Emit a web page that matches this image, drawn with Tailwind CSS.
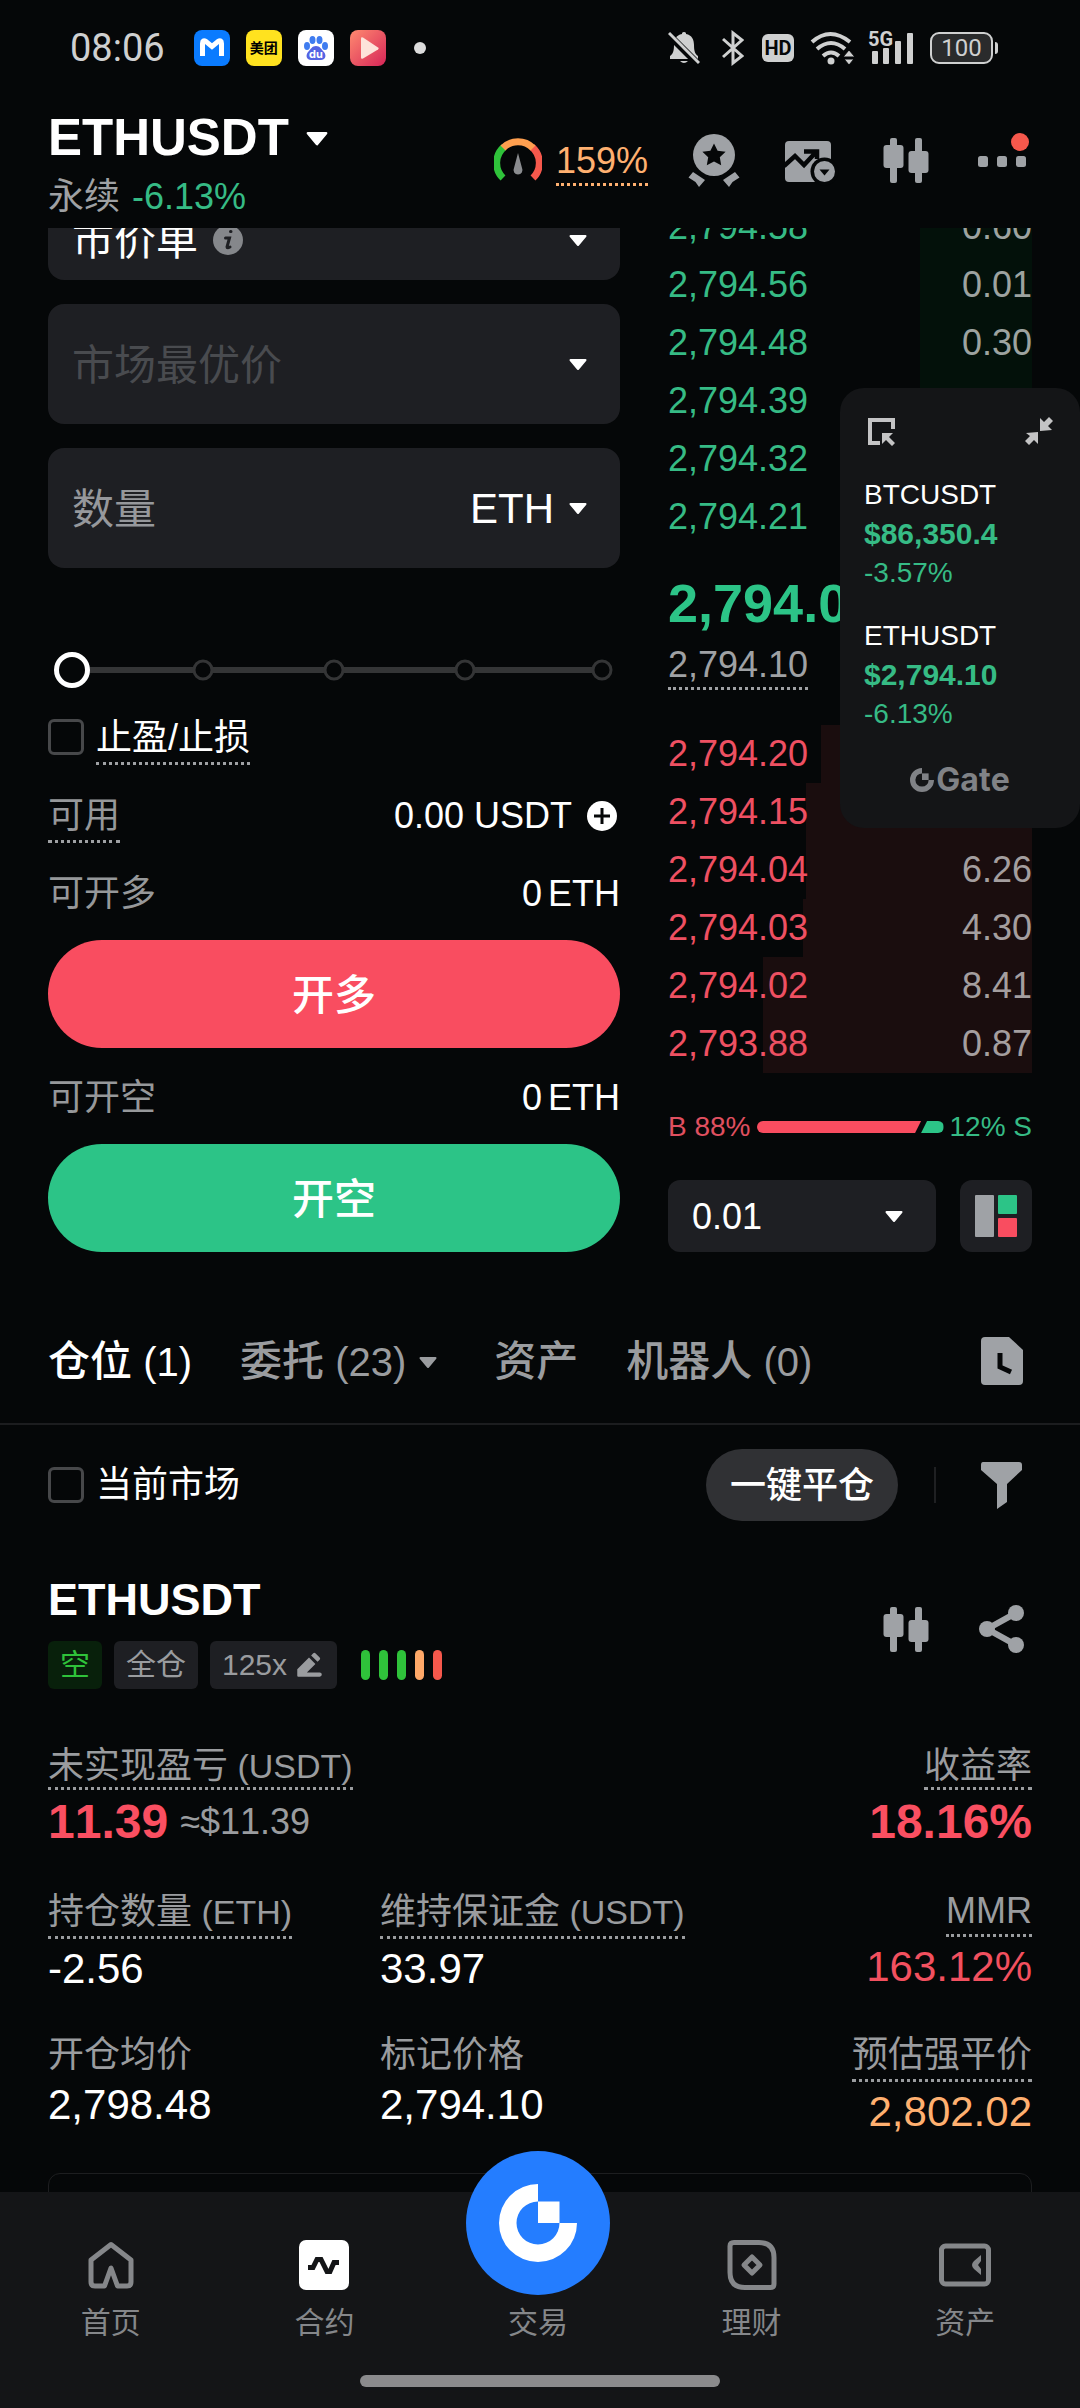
<!DOCTYPE html>
<html lang="zh-CN">
<head>
    <title>ETHUSDT 永续</title>
    <meta charset="utf-8">
    <meta name="viewport" content="width=device-width, initial-scale=1">
    <script src="https://cdn.jsdelivr.net/npm/@tailwindcss/browser@4"></script>
</head>
<body class="flex h-screen flex-col overflow-hidden bg-[#050708] font-['Liberation_Sans','Noto_Sans_CJK_SC',sans-serif] text-4xl text-white [font-kerning:none]">
    <!-- 公用图标 -->
    <svg class="hidden">
        <symbol id="caret" viewBox="0 0 36 36">
            <path d="M10.500 14h15L18 23z" fill="currentColor" stroke="currentColor" stroke-width="2" stroke-linejoin="round"/>
        </symbol>
        <symbol id="candles" viewBox="0 0 60 60">
            <g fill="currentColor">
                <rect x="14" y="8" width="7" height="45" rx="2"/>
                <rect x="7.500" y="15" width="20" height="23" rx="3"/>
                <rect x="39" y="8" width="7" height="45" rx="2"/>
                <rect x="32.500" y="21" width="20" height="22" rx="3"/>
            </g>
        </symbol>
        <symbol id="gate" viewBox="0 0 78 78">
            <path d="M39 0A39 39 0 1 0 78 39H60.500A21.500 21.500 0 1 1 39 17.500z" fill="currentColor"/>
            <rect x="39" y="17.500" width="21.500" height="21.500" fill="currentColor"/>
        </symbol>
    </svg>

    <div class="relative z-10 shrink-0 bg-[#050708]">
        <!-- 系统状态栏 -->
        <div class="flex h-24 items-center justify-between pr-[82px] pl-[70px] text-[#cfd0d0]">
            <div class="flex items-center">
                <span class="font-[Roboto] text-[38px]">08:06</span>
                <svg class="ml-[29px] size-9" viewBox="0 0 36 36">
                    <rect width="36" height="36" rx="8" fill="#0a7bff"/>
                    <path d="M8.500 26V13.500q0-4 3.500-2l6 5 6-5q3.500-2 3.500 2V26" fill="none" stroke="#fff" stroke-width="5"/>
                </svg>
                <span class="ml-4 flex size-9 items-center justify-center rounded-lg bg-[#ffe21f] text-sm font-bold text-black">美团</span>
                <svg class="ml-4 size-9" viewBox="0 0 36 36">
                    <rect width="36" height="36" rx="8" fill="#fff"/>
                    <g fill="#3f7cf0">
                        <ellipse cx="9" cy="16" rx="3" ry="4"/>
                        <ellipse cx="14.500" cy="10" rx="3" ry="4"/>
                        <ellipse cx="21.500" cy="10" rx="3" ry="4"/>
                        <ellipse cx="27" cy="16" rx="3" ry="4"/>
                    </g>
                    <path d="M18 16c4 0 5 3 8 6 3 4 1 8-3 8H13c-4 0-6-4-3-8 3-3 4-6 8-6z" fill="#5464e4"/>
                    <text x="18" y="28" text-anchor="middle" font-family="Inter" font-size="11" font-weight="700" fill="#fff">du</text>
                </svg>
                <svg class="ml-4 size-9" viewBox="0 0 36 36">
                    <defs>
                        <linearGradient id="play" x1="0" y1="0" x2="1" y2="1">
                            <stop offset="0" stop-color="#ff8a70"/>
                            <stop offset="1" stop-color="#d62558"/>
                        </linearGradient>
                    </defs>
                    <rect width="36" height="36" rx="8" fill="url(#play)"/>
                    <path d="M11 8.500v19q0 2 2 1l15-9q1.500-1 0-2l-15-10q-2-1-2 1z" fill="#fde3da"/>
                </svg>
                <span class="ml-7 size-3 rounded-full bg-[#dcdcdc]"></span>
            </div>
            <div class="flex items-center">
                <svg class="h-9 w-8" viewBox="0 0 32 36" fill="currentColor">
                    <path d="M16 2c2 0 2 1 2 2 6 1 8 6 8 11 0 6 1 9 4 11v3H2v-3c3-2 4-5 4-11 0-5 2-10 8-11 0-1 0-2 2-2zM12 31h8q-4 4-8 0z"/>
                    <path d="M0 4l30 30" stroke="#050708" stroke-width="7"/>
                    <path d="M1 3l30 30" stroke="currentColor" stroke-width="3"/>
                </svg>
                <svg class="ml-[22px] h-9 w-[22px]" viewBox="0 0 22 36" fill="none" stroke="currentColor" stroke-width="3">
                    <path d="M1 9l19 17-9 7V3l9 7L1 27"/>
                </svg>
                <span class="ml-[18px] flex h-7 w-8 items-center justify-center rounded-md bg-[#cfd0d0] font-[Roboto] text-xl font-bold text-[#050708]">HD</span>
                <svg class="ml-4 h-9 w-[46px]" viewBox="0 0 46 36" fill="none" stroke="currentColor" stroke-width="4">
                    <path d="M2 12q18-16 38 0M7 19q14-12 28 0M13 26q8-7 16 0"/>
                    <circle cx="21" cy="31" r="3.500" fill="currentColor" stroke="none"/>
                    <path d="M39 20l6 7H33zM39 35l5-6H34z" fill="currentColor" stroke="#050708" stroke-width="1"/>
                </svg>
                <svg class="ml-3 h-9 w-[46px] overflow-visible" viewBox="0 0 46 36" fill="currentColor">
                    <text x="0" y="16" font-family="Roboto" font-size="20" font-weight="700">5G</text>
                    <rect x="4" y="21" width="6" height="13" rx="1"/>
                    <rect x="15" y="18" width="6" height="16" rx="1"/>
                    <rect x="27" y="11" width="6" height="23" rx="1"/>
                    <rect x="39" y="3" width="6" height="31" rx="1"/>
                </svg>
                <span class="ml-4 flex h-8 w-[63px] items-center justify-center rounded-[9px] border-2 border-[#cfd0d0] bg-[#2a2b2c] font-[Roboto] text-2xl">100</span>
                <span class="ml-0.5 h-3 w-[3px] rounded-r bg-[#cfd0d0]"></span>
            </div>
        </div>

        <!-- 交易对标题 -->
        <header class="flex items-center justify-between px-12 pt-3 pb-[7px]">
            <div>
                <button class="flex items-center leading-[60px]">
                    <h1 class="text-[51px] font-bold">ETHUSDT</h1>
                    <svg class="ml-1.5 size-[44px]"><use href="#caret"/></svg>
                </button>
                <p class="mt-[5px] flex gap-3 leading-[48px]">
                    <span class="text-[#9fa1a4]">永续</span>
                    <span class="text-[#36bb85]">-6.13%</span>
                </p>
            </div>
            <div class="flex items-center gap-9 pb-2.5 text-[#9fa2a6]">
                <div class="flex items-center gap-3.5">
                    <svg class="h-11 w-12" viewBox="0 0 48 44" fill="none" stroke-width="7">
                        <path d="M9 40A21 21 0 0 1 10 9" stroke="#2fc23a"/>
                        <path d="M38 9A21 21 0 0 1 39 40" stroke="#f6584c"/>
                        <path d="M9 10A21 21 0 0 1 39 10" stroke="#ff9f4f"/>
                        <path d="M24 15l4 15a4.500 4.500 0 1 1-8 0z" fill="#8a8c8f"/>
                    </svg>
                    <span class="mt-1.5 border-b-3 border-dotted border-[#ffb070] leading-11 text-[#ffb070]">159%</span>
                </div>
                <button aria-label="活动">
                    <svg class="size-[60px]" viewBox="0 0 60 60" fill="currentColor">
                        <circle cx="30" cy="25" r="21"/>
                        <path d="M30 13.500l3.600 7.200 8 1.100-5.800 5.500 1.400 7.900-7.200-3.800-7.200 3.800 1.400-7.900-5.800-5.500 8-1.100z" fill="#050708"/>
                        <path d="M9 42l12 8-6 7-3.500-5-7-4.500zM51 42l-12 8 6 7 3.500-5 7-4.500z"/>
                    </svg>
                </button>
                <button aria-label="行情">
                    <svg class="size-[60px]" viewBox="0 0 60 60" fill="currentColor">
                        <rect x="5" y="11" width="46" height="41" rx="4"/>
                        <path d="M4 36l11-10 9 9 13-14M24 21.500h13V29" fill="none" stroke="#050708" stroke-width="4.500"/>
                        <circle cx="44.500" cy="41.500" r="14" fill="#050708"/>
                        <circle cx="44.500" cy="41.500" r="10.500"/>
                        <path d="M39.500 39.500h10l-5 6z" fill="#050708"/>
                    </svg>
                </button>
                <button aria-label="K线"><svg class="size-[60px]"><use href="#candles"/></svg></button>
                <button aria-label="更多">
                    <svg class="size-[60px]" viewBox="0 0 60 60" fill="currentColor">
                        <rect x="6" y="26" width="10" height="11" rx="2.500"/>
                        <rect x="25" y="26" width="10" height="11" rx="2.500"/>
                        <rect x="44" y="26" width="10" height="11" rx="2.500"/>
                        <circle cx="48" cy="12" r="9" fill="#f6584c"/>
                    </svg>
                </button>
            </div>
        </header>
    </div>

    <main class="relative -mt-[30px] min-h-0 flex-1 overflow-hidden">
        <div class="grid grid-cols-[572fr_364fr] gap-12 px-12">
            <!-- 下单 -->
            <form class="pt-0.5">
                <div class="flex flex-col gap-6 text-[42px]">
                    <div class="relative">
                        <select aria-label="订单类型" class="h-20 w-full appearance-none rounded-2xl bg-[#1e1f23] px-6 pt-0.5">
                            <option>市价单</option>
                        </select>
                        <svg class="pointer-events-none absolute top-1/2 left-[165px] size-[30px] -translate-y-1/2" viewBox="0 0 30 30">
                            <circle cx="15" cy="15" r="15" fill="#85878b"/>
                            <path d="M17.500 6.500h.5M12.500 13h4l-2.500 9q0 1.500 3 0" fill="none" stroke="#1e1f23" stroke-width="3" stroke-linecap="round"/>
                        </svg>
                        <svg class="pointer-events-none absolute top-1/2 right-6 size-9 -translate-y-1/2"><use href="#caret"/></svg>
                    </div>
                    <div class="relative">
                        <select aria-label="价格" class="h-[120px] w-full appearance-none rounded-2xl bg-[#1e1f23] px-6 pt-1 text-[#494b4f]">
                            <option>市场最优价</option>
                        </select>
                        <svg class="pointer-events-none absolute top-1/2 right-6 size-9 -translate-y-1/2"><use href="#caret"/></svg>
                    </div>
                    <div class="relative flex h-[120px] items-center rounded-2xl bg-[#1e1f23]">
                        <input type="text" aria-label="数量" placeholder="数量" class="h-full w-0 flex-1 px-6 pt-1 placeholder:text-[#96989c]">
                        <select aria-label="单位" class="h-full appearance-none pt-0.5 pr-[66px]">
                            <option>ETH</option>
                        </select>
                        <svg class="pointer-events-none absolute right-6 size-9"><use href="#caret"/></svg>
                    </div>
                </div>

                <div class="relative mt-[84px] h-9">
                    <svg class="w-full" viewBox="0 0 572 36" stroke="#343536">
                        <path d="M24 18h530" stroke-width="6"/>
                        <g fill="#050708" stroke-width="3">
                            <circle cx="155" cy="18" r="9"/>
                            <circle cx="286" cy="18" r="9"/>
                            <circle cx="417" cy="18" r="9"/>
                            <circle cx="554" cy="18" r="9"/>
                        </g>
                    </svg>
                    <input type="range" aria-label="仓位比例" min="0" max="100" value="0" class="absolute inset-x-1.5 top-0 h-9 appearance-none bg-transparent [&::-webkit-slider-thumb]:size-9 [&::-webkit-slider-thumb]:appearance-none [&::-webkit-slider-thumb]:rounded-full [&::-webkit-slider-thumb]:border-5 [&::-webkit-slider-thumb]:border-white [&::-webkit-slider-thumb]:bg-[#050708]">
                </div>

                <div class="mt-[26px] flex items-start gap-3 leading-[48px]">
                    <input id="tpsl" type="checkbox" class="mt-[5px] size-9 appearance-none rounded-md border-3 border-[#47484a]">
                    <label for="tpsl" class="border-b-3 border-dotted border-[#9fa1a4]">止盈/止损</label>
                </div>
                <div class="mt-[27px] flex items-start justify-between leading-[48px]">
                    <span class="border-b-3 border-dotted border-[#9fa1a4] text-[#96989a]">可用</span>
                    <span class="flex items-center gap-3">
                        0.00 USDT
                        <button type="button" aria-label="充值">
                            <svg class="size-9" viewBox="0 0 36 36">
                                <circle cx="18" cy="18" r="15" fill="#fff"/>
                                <path d="M18 10v16M10 18h16" stroke="#050708" stroke-width="3"/>
                            </svg>
                        </button>
                    </span>
                </div>
                <div class="mt-[27px] flex justify-between leading-[48px]">
                    <span class="text-[#96989a]">可开多</span>
                    <span class="flex gap-1.5"><span>0</span>ETH</span>
                </div>
                <button type="button" class="mt-[22px] h-[108px] w-full rounded-full bg-[#f94d60] pt-1 text-[42px] font-medium">开多</button>
                <div class="mt-[26px] flex justify-between leading-[48px]">
                    <span class="text-[#96989a]">可开空</span>
                    <span class="flex gap-1.5"><span>0</span>ETH</span>
                </div>
                <button type="button" class="mt-[22px] h-[108px] w-full rounded-full bg-[#2cc487] pt-1 text-[42px] font-medium">开空</button>
            </form>

            <!-- 盘口 -->
            <section>
                <table class="w-full">
                    <tbody class="text-[#36bb85] [&_td+td]:text-right [&_td+td]:text-[#9da3a0] [&_tr]:h-[58px]">
                        <tr class="bg-[linear-gradient(to_left,#03110a_31%,transparent_31%)]"><td>2,794.58</td><td>0.60</td></tr>
                        <tr class="bg-[linear-gradient(to_left,#03110a_31%,transparent_31%)]"><td>2,794.56</td><td>0.01</td></tr>
                        <tr class="bg-[linear-gradient(to_left,#03110a_31%,transparent_31%)]"><td>2,794.48</td><td>0.30</td></tr>
                        <tr class="bg-[linear-gradient(to_left,#03110a_31%,transparent_31%)]"><td>2,794.39</td><td></td></tr>
                        <tr><td>2,794.32</td><td></td></tr>
                        <tr><td>2,794.21</td><td></td></tr>
                    </tbody>
                </table>
                <p class="mt-[25px] text-[54px] leading-[64px] font-bold text-[#2cc487]">2,794.09</p>
                <p class="mt-2 flex"><span class="border-b-3 border-dotted border-[#9fa1a4] leading-11 text-[#9fa1a4]">2,794.10</span></p>
                <table class="mt-[35px] w-full">
                    <tbody class="text-[#ee5062] [&_td+td]:text-right [&_td+td]:text-[#a49e9f] [&_tr]:h-[58px]">
                        <tr class="bg-[linear-gradient(to_left,#1a0d0e_58%,transparent_58%)]"><td>2,794.20</td><td></td></tr>
                        <tr class="bg-[linear-gradient(to_left,#1a0d0e_62%,transparent_62%)]"><td>2,794.15</td><td></td></tr>
                        <tr class="bg-[linear-gradient(to_left,#1a0d0e_62%,transparent_62%)]"><td>2,794.04</td><td>6.26</td></tr>
                        <tr class="bg-[linear-gradient(to_left,#1a0d0e_63%,transparent_63%)]"><td>2,794.03</td><td>4.30</td></tr>
                        <tr class="bg-[linear-gradient(to_left,#1a0d0e_74%,transparent_74%)]"><td>2,794.02</td><td>8.41</td></tr>
                        <tr class="bg-[linear-gradient(to_left,#1a0d0e_74%,transparent_74%)]"><td>2,793.88</td><td>0.87</td></tr>
                    </tbody>
                </table>
                <div class="mt-[34px] flex items-center gap-1.5 text-[28px] leading-10">
                    <span class="text-[#e05060]">B 88%</span>
                    <div class="flex h-3 flex-1 overflow-hidden rounded-full">
                        <div class="w-[88%] bg-[#f94d60] [clip-path:polygon(0_0,100%_0,calc(100%-6px)_100%,0_100%)]"></div>
                        <div class="flex-1 bg-[#2cc487] [clip-path:polygon(6px_0,100%_0,100%_100%,0_100%)]"></div>
                    </div>
                    <span class="text-[#36bb85]">12% S</span>
                </div>
                <div class="mt-[33px] flex gap-6">
                    <div class="relative flex-1">
                        <select aria-label="价格精度" class="h-[72px] w-full appearance-none rounded-xl bg-[#1e1f23] px-6 pt-0.5">
                            <option>0.01</option>
                        </select>
                        <svg class="pointer-events-none absolute top-1/2 right-6 size-9 -translate-y-1/2"><use href="#caret"/></svg>
                    </div>
                    <button aria-label="盘口样式" class="flex size-[72px] items-center justify-center rounded-xl bg-[#1e1f23]">
                        <svg class="size-[42px]" viewBox="0 0 42 42">
                            <rect width="19" height="42" rx="1" fill="#9fa2a6"/>
                            <rect x="23" width="19" height="19" rx="1" fill="#2cc487"/>
                            <rect x="23" y="23" width="19" height="19" rx="1" fill="#f94d60"/>
                        </svg>
                    </button>
                </div>
            </section>
        </div>

        <!-- 标签页 -->
        <nav class="mt-20 flex items-center gap-12 border-b-2 border-[#1c1d1f] px-12 pb-[31px] text-[42px] leading-[60px] font-medium text-[#9a9c9f]">
            <a href="#" class="text-white">仓位<span class="text-[40px]"> (1)</span></a>
            <a href="#" class="flex items-center"><span>委托<span class="text-[40px]"> (23)</span></span><svg class="ml-1 size-9"><use href="#caret"/></svg></a>
            <a href="#">资产</a>
            <a href="#">机器人<span class="text-[40px]"> (0)</span></a>
            <button aria-label="历史" class="ml-auto">
                <svg class="size-[60px]" viewBox="0 0 60 60">
                    <path d="M13 5h24l14 13v31q0 4-4 4H13q-4 0-4-4V9q0-4 4-4z" fill="#9fa2a6"/>
                    <path d="M28 21v14l11 5" fill="none" stroke="#050708" stroke-width="5"/>
                </svg>
            </button>
        </nav>

        <div class="mt-6 flex items-center px-12">
            <input id="current" type="checkbox" class="size-9 appearance-none rounded-md border-3 border-[#47484a]">
            <label for="current" class="ml-3">当前市场</label>
            <button class="ml-auto h-[72px] rounded-full bg-[#303134] px-6 pt-0.5 font-medium">一键平仓</button>
            <span class="mx-9 h-9 w-0.5 bg-[#1f2022]"></span>
            <button aria-label="筛选">
                <svg class="size-[60px]" viewBox="0 0 60 60">
                    <path d="M11 7h36q3 0 3 3v5L35 29v18l-10 7V29L9 15v-5q0-3 2-3z" fill="#9fa2a6"/>
                </svg>
            </button>
        </div>

        <!-- 持仓 -->
        <section class="mt-[51px] px-12">
            <div class="flex items-center">
                <div class="flex-1">
                    <h2 class="text-[45px] leading-14 font-bold">ETHUSDT</h2>
                    <div class="mt-[13px] flex items-center gap-3 text-3xl leading-[48px] text-[#9a9c9f]">
                        <span class="rounded-md bg-[#08200b] px-3 text-[#2fc23a]">空</span>
                        <span class="rounded-md bg-[#1e1f23] px-3">全仓</span>
                        <button class="flex items-center gap-1.5 rounded-md bg-[#1e1f23] px-3">125x
                            <svg class="size-8" viewBox="0 0 30 30" fill="currentColor">
                                <path d="M4 25v-6L15 8l6 6-8 8h12q2 0 2 2t-2 2H5q-1 0-1-1zM17 6l2-2q1-1 2 0l4 4q1 1 0 2l-2 2z"/>
                            </svg>
                        </button>
                        <div class="ml-3 flex gap-[9px]">
                            <span class="h-[30px] w-[9px] rounded-full bg-[#2fc23a]"></span>
                            <span class="h-[30px] w-[9px] rounded-full bg-[#2fc23a]"></span>
                            <span class="h-[30px] w-[9px] rounded-full bg-[#2fc23a]"></span>
                            <span class="h-[30px] w-[9px] rounded-full bg-[#ffa868]"></span>
                            <span class="h-[30px] w-[9px] rounded-full bg-[#f6584c]"></span>
                        </div>
                    </div>
                </div>
                <div class="flex gap-9 pb-1 text-[#9fa2a6]">
                    <button aria-label="K线"><svg class="size-[60px]"><use href="#candles"/></svg></button>
                    <button aria-label="分享">
                        <svg class="size-[60px]" viewBox="0 0 60 60" fill="currentColor">
                            <path d="M44 14L15 30l29 16" fill="none" stroke="currentColor" stroke-width="6"/>
                            <circle cx="44" cy="14" r="8"/>
                            <circle cx="15" cy="30" r="8"/>
                            <circle cx="44" cy="46" r="8"/>
                        </svg>
                    </button>
                </div>
            </div>

            <div class="mt-14 flex flex-col gap-9 text-[42px]">
                <div class="flex justify-between">
                    <div>
                        <p class="flex text-4xl leading-[42px] text-[#9a9c9f]"><span class="border-b-3 border-dotted border-[#9a9c9f]">未实现盈亏<span class="text-[34px]"> (USDT)</span></span></p>
                        <p class="mt-0.5 flex items-center gap-3 leading-[60px]">
                            <b class="text-5xl leading-[60px] text-[#fa4f61]">11.39</b>
                            <span class="text-4xl leading-[60px] text-[#9a9c9f]">≈$11.39</span>
                        </p>
                    </div>
                    <div class="flex flex-col items-end">
                        <span class="border-b-3 border-dotted border-[#9a9c9f] text-4xl leading-[42px] text-[#9a9c9f]">收益率</span>
                        <b class="mt-0.5 text-5xl leading-[60px] text-[#fa4f61]">18.16%</b>
                    </div>
                </div>
                <div class="grid grid-cols-3 gap-3 leading-[52px]">
                    <div class="flex flex-col items-start">
                        <span class="mb-1 border-b-3 border-dotted border-[#9a9c9f] text-4xl leading-[48px] text-[#9a9c9f]">持仓数量<span class="text-[34px]"> (ETH)</span></span>
                        <span>-2.56</span>
                    </div>
                    <div class="flex flex-col items-start">
                        <span class="mb-1 border-b-3 border-dotted border-[#9a9c9f] text-4xl leading-[48px] whitespace-nowrap text-[#9a9c9f]">维持保证金<span class="text-[34px]"> (USDT)</span></span>
                        <span>33.97</span>
                    </div>
                    <div class="flex flex-col items-end">
                        <span class="mb-1 border-b-3 border-dotted border-[#9a9c9f] text-4xl leading-[46px] text-[#9a9c9f]">MMR</span>
                        <span class="text-[#f2505f]">163.12%</span>
                    </div>
                </div>
                <div class="grid grid-cols-3 gap-3 leading-[52px]">
                    <div class="flex flex-col items-start">
                        <span class="text-4xl leading-[48px] text-[#9a9c9f]">开仓均价</span>
                        <span>2,798.48</span>
                    </div>
                    <div class="flex flex-col items-start">
                        <span class="text-4xl leading-[48px] text-[#9a9c9f]">标记价格</span>
                        <span>2,794.10</span>
                    </div>
                    <div class="flex flex-col items-end">
                        <span class="mb-1 border-b-3 border-dotted border-[#9a9c9f] text-4xl leading-[48px] text-[#9a9c9f]">预估强平价</span>
                        <span class="text-[#ffb070]">2,802.02</span>
                    </div>
                </div>
            </div>
            <div class="mt-[35px] h-24 rounded-xl border border-[#1d1e20]"></div>
        </section>

        <!-- 悬浮行情窗 -->
        <aside class="absolute top-[190px] right-0 h-[440px] w-60 rounded-3xl bg-[#141517] px-6 pt-7 text-[28px] leading-[39px]">
            <div class="flex justify-between text-[#c4c4c5]">
                <button aria-label="打开">
                    <svg class="size-8" viewBox="0 0 32 32" fill="none" stroke="currentColor" stroke-width="4">
                        <path d="M16 27H6V4h23v9"/>
                        <path d="M18 17h11l-4 4 6 6-3 3-6-6-4 4z" fill="currentColor" stroke="none"/>
                    </svg>
                </button>
                <button aria-label="收起">
                    <svg class="size-8" viewBox="0 0 32 32" fill="currentColor">
                        <path d="M16 2l4 4 5-5 4 4-5 5 4 4-12 1zM2 17l12-1v12l-4-4-5 5-4-4 5-5z"/>
                    </svg>
                </button>
            </div>
            <p class="mt-[27px]">BTCUSDT</p>
            <p class="text-[30px] font-bold text-[#36bb85]">$86,350.4</p>
            <p class="text-[#36bb85]">-3.57%</p>
            <p class="mt-6">ETHUSDT</p>
            <p class="text-[30px] font-bold text-[#36bb85]">$2,794.10</p>
            <p class="text-[#36bb85]">-6.13%</p>
            <p class="mt-[27px] flex items-center justify-center gap-0.5 font-[Inter] text-[32px] font-bold text-[#808286]"><svg class="size-6"><use href="#gate"/></svg>Gate</p>
        </aside>
    </main>

    <!-- 底部导航 -->
    <footer class="relative z-10 shrink-0 bg-[#141517] pb-[21px]">
        <nav class="grid grid-cols-5 pt-[43px] pr-2 pl-1 text-3xl leading-10 text-[#85878a]">
            <a href="#" class="flex flex-col items-center gap-2">
                <svg class="size-[60px]" viewBox="0 0 60 60" fill="none" stroke="currentColor" stroke-width="5" stroke-linejoin="round">
                    <path d="M30 9.500L50 25v22q0 4-4 4H36.500L30 33l-6.500 18H14q-4 0-4-4V25z"/>
                </svg>
                首页
            </a>
            <a href="#" class="flex flex-col items-center gap-2">
                <svg class="size-[60px]" viewBox="0 0 60 60">
                    <rect x="5" y="5" width="50" height="50" rx="7" fill="#fff"/>
                    <path d="M14 32.500h5l4-8h4l6 12h3l4-9h5" fill="none" stroke="#141517" stroke-width="5"/>
                </svg>
                合约
            </a>
            <a href="#" class="relative flex flex-col items-center pt-[68px]">
                <span class="absolute -top-[84px] flex size-36 items-center justify-center rounded-full bg-[#247dff] text-white">
                    <svg class="size-[78px]"><use href="#gate"/></svg>
                </span>
                交易
            </a>
            <a href="#" class="flex flex-col items-center gap-2">
                <svg class="size-[60px]" viewBox="0 0 60 60" fill="none" stroke="currentColor" stroke-width="5">
                    <path d="M12 7.500h25q15 0 15 15V49q0 3.500-3.500 3.500H23q-15 0-15-15V11q0-3.500 4-3.500z"/>
                    <path d="M30 22l8 8-8 8-8-8z" stroke-linejoin="round"/>
                </svg>
                理财
            </a>
            <a href="#" class="flex flex-col items-center gap-2">
                <svg class="size-[60px]" viewBox="0 0 60 60">
                    <rect x="6.500" y="11" width="47" height="38" rx="4" fill="none" stroke="currentColor" stroke-width="5"/>
                    <path d="M46 20v6l-3 4 3 4v6l-7-6q-4-4 0-8z" fill="currentColor"/>
                </svg>
                资产
            </a>
        </nav>
        <div class="mx-auto mt-8 h-3 w-1/3 rounded-full bg-[#8b8b8d]"></div>
    </footer>
</body>
</html>
